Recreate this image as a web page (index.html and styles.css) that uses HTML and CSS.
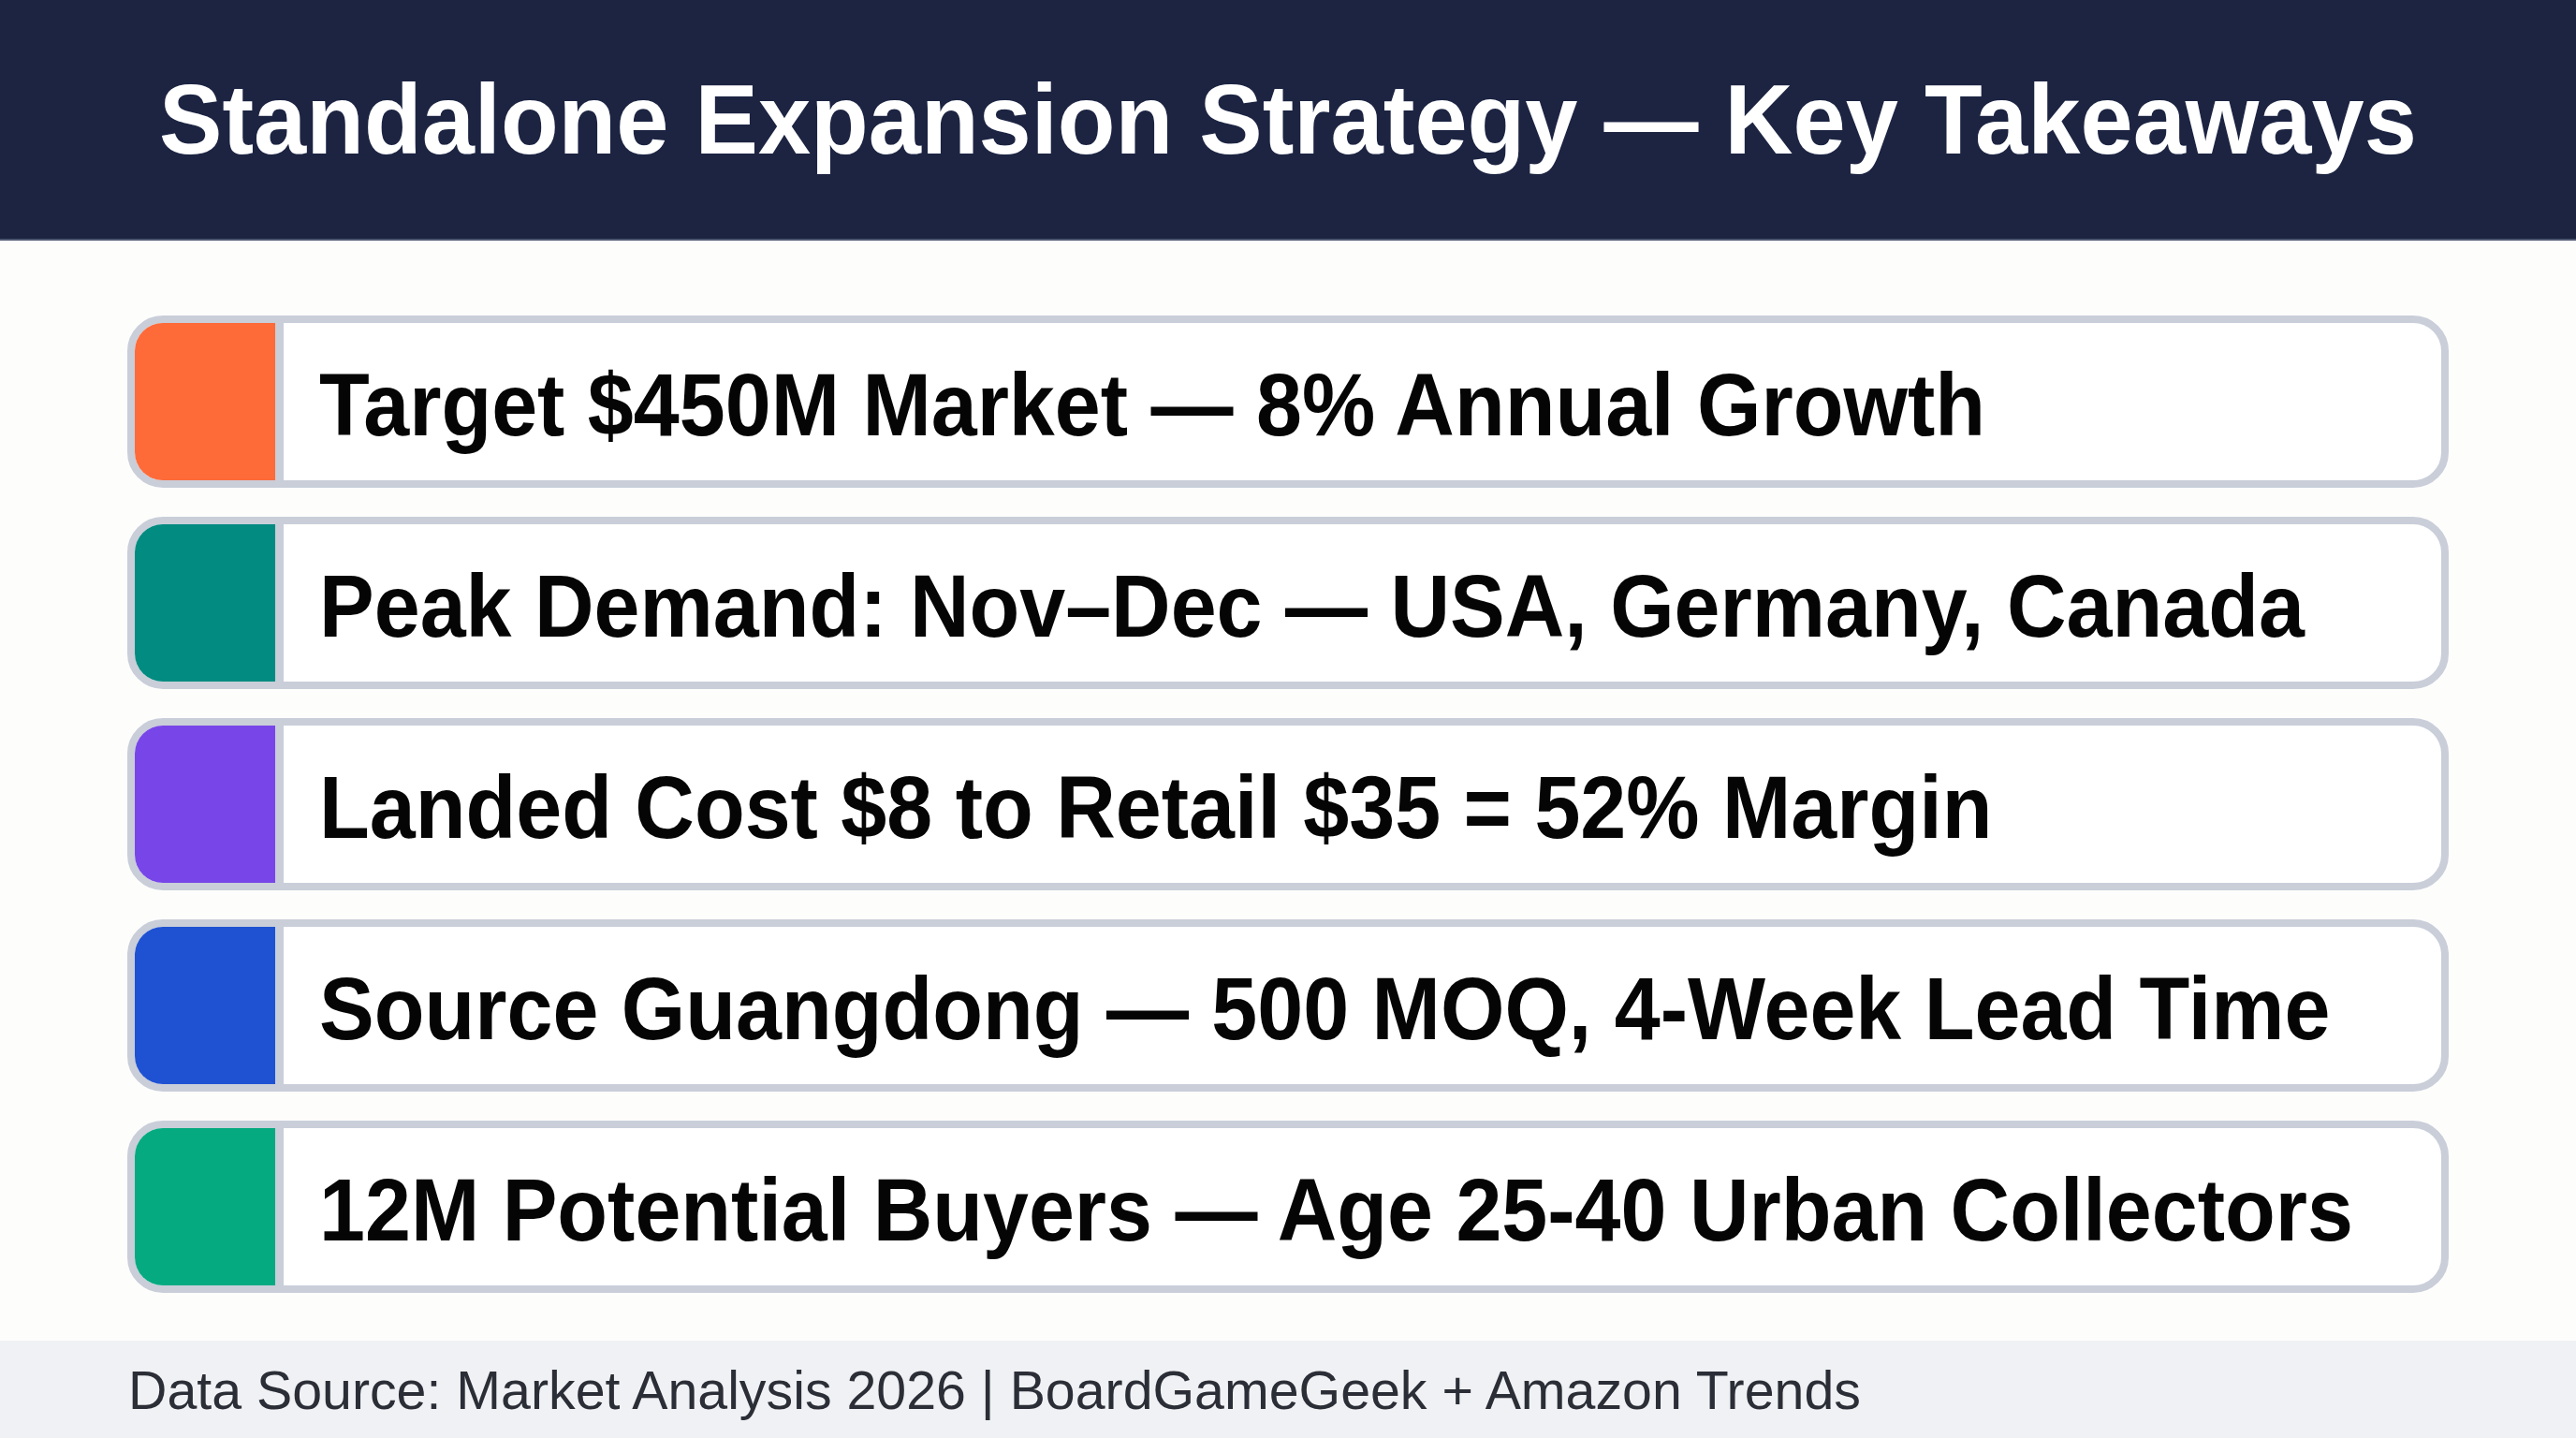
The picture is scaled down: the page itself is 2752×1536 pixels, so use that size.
FILE: index.html
```
<!DOCTYPE html>
<html lang="en">
<head>
<meta charset="utf-8">
<title>Standalone Expansion Strategy — Key Takeaways</title>
<link rel="stylesheet" href="styles.css">
</head>
<body>
<div class="page">
  <header class="header">
    <h1 class="title">Standalone Expansion Strategy — Key Takeaways</h1>
  </header>
  <main class="main">
    <div class="card">
      <div class="swatch swatch-orange"></div>
      <div class="card-text">Target $450M Market — 8% Annual Growth</div>
    </div>
    <div class="card">
      <div class="swatch swatch-teal"></div>
      <div class="card-text">Peak Demand: Nov–Dec — USA, Germany, Canada</div>
    </div>
    <div class="card">
      <div class="swatch swatch-purple"></div>
      <div class="card-text">Landed Cost $8 to Retail $35 = 52% Margin</div>
    </div>
    <div class="card">
      <div class="swatch swatch-blue"></div>
      <div class="card-text">Source Guangdong — 500 MOQ, 4-Week Lead Time</div>
    </div>
    <div class="card">
      <div class="swatch swatch-green"></div>
      <div class="card-text">12M Potential Buyers — Age 25-40 Urban Collectors</div>
    </div>
  </main>
  <footer class="footer">
    <span class="source">Data Source: Market Analysis 2026 | BoardGameGeek + Amazon Trends</span>
  </footer>
</div>
</body>
</html>
```
FILE: styles.css
```
* {
  box-sizing: border-box;
}
html, body {
  margin: 0;
  padding: 0;
}
body {
  width: 2752px;
  height: 1536px;
  overflow: hidden;
  background: #fdfdfc;
  font-family: "Liberation Sans", Arial, sans-serif;
}
.page {
  display: flex;
  flex-direction: column;
  width: 2752px;
  height: 1536px;
}
.header {
  height: 257px;
  flex: 0 0 257px;
  background: #1c2442;
  border-bottom: 2px solid #4d566f;
  display: flex;
  align-items: center;
  justify-content: center;
}
.title {
  margin: 0;
  color: #ffffff;
  font-size: 101px;
  font-weight: 700;
  line-height: 1;
  letter-spacing: 0;
  white-space: nowrap;
  transform: scaleY(1.05);
}
.main {
  flex: 1 1 auto;
  display: flex;
  flex-direction: column;
  gap: 31px;
  padding: 80px 136px 0;
}
.card {
  height: 184px;
  flex: 0 0 184px;
  display: flex;
  align-items: stretch;
  background: #ffffff;
  border: 8px solid #c9ced9;
  border-radius: 38px;
  overflow: hidden;
}
.swatch {
  width: 159px;
  flex: 0 0 159px;
  border-right: 9px solid #c9ced9;
}
.swatch-orange { background: #ff6a39; }
.swatch-teal { background: #028b80; }
.swatch-purple { background: #7846e8; }
.swatch-blue { background: #1f52d2; }
.swatch-green { background: #06aa81; }
.card-text {
  display: flex;
  align-items: center;
  padding-left: 38px;
  padding-top: 7px;
  color: #050505;
  font-size: 88px;
  font-weight: 700;
  line-height: 1;
  white-space: nowrap;
  transform: scaleY(1.07);
}
.footer {
  height: 104px;
  flex: 0 0 104px;
  background: #f0f1f4;
  display: flex;
  align-items: center;
  padding-left: 137px;
  padding-top: 4px;
}
.source {
  color: #2b2e36;
  font-size: 57.3px;
  font-weight: 400;
  line-height: 1;
  white-space: nowrap;
}
```
